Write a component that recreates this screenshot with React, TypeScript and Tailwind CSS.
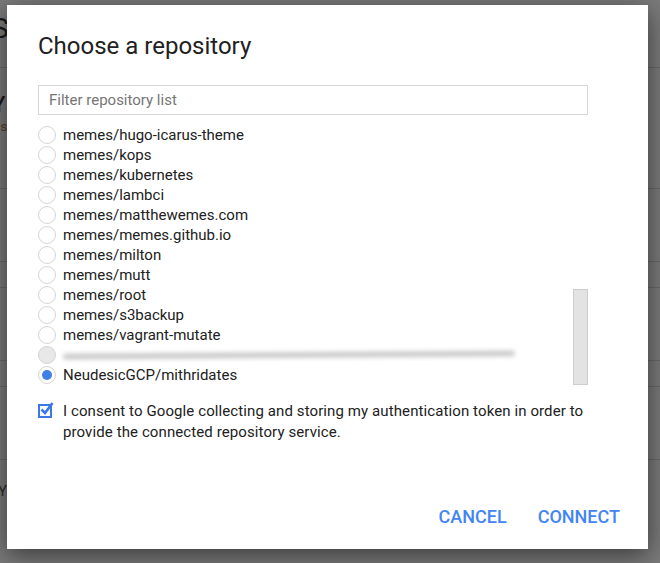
import React from "react";

const repos = [
  "memes/hugo-icarus-theme",
  "memes/kops",
  "memes/kubernetes",
  "memes/lambci",
  "memes/matthewemes.com",
  "memes/memes.github.io",
  "memes/milton",
  "memes/mutt",
  "memes/root",
  "memes/s3backup",
  "memes/vagrant-mutate",
];

function Radio({ checked = false, disabled = false }: { checked?: boolean; disabled?: boolean }) {
  return (
    <span
      className={`w-[18px] h-[18px] rounded-full border border-[#d4d4d4] flex items-center justify-center shrink-0 ${
        disabled ? "bg-[#e8e8e8]" : "bg-white"
      }`}
    >
      {checked && <span className="w-[10px] h-[10px] rounded-full bg-[#3f7fe8]" />}
    </span>
  );
}

export default function App() {
  return (
    <div
      className="relative w-[660px] h-[563px] overflow-hidden bg-[#7b7b7b]"
      style={{ fontFamily: "Roboto, 'Noto Sans', sans-serif" }}
    >
      {/* page behind the overlay */}
      <div className="-ml-[8px] text-[#1a1a1a]">
        <div className="h-[68px] border-b border-[#6a6a6a] pt-[12px] text-[28px] leading-[34px]">S</div>
        <div className="h-[121px] border-b border-[#6a6a6a] pt-[24px]">
          <div className="text-[22px] leading-[26px] font-medium">Y</div>
          <div className="text-[13px] leading-[18px] text-[#5a3a1a]">Us</div>
          <div className="text-[13px] leading-[18px] text-[#4a4a4a]">f</div>
        </div>
        <div className="h-[73px] border-b border-[#6a6a6a]" />
        <div className="h-[26px] border-b border-[#6a6a6a]" />
        <div className="h-[73px] border-b border-[#6a6a6a]" />
        <div className="h-[26px] border-b border-[#6a6a6a]" />
        <div className="h-[73px] border-b border-[#6a6a6a]" />
        <div className="pt-[20px] text-[15px] text-[#2a2a2a] pl-[6px]">Yo</div>
      </div>

      {/* dialog */}
      <div className="absolute left-[7px] top-[5px] w-[641px] h-[544px] bg-white shadow-[0_6px_24px_rgba(0,0,0,0.55)] flex flex-col px-[31px]">
        <h1 className="mt-[25px] text-[24px] leading-[32px] text-[#212121]">Choose a repository</h1>

        <div className="mt-[23px] mr-[29px] h-[30px] border border-[#d6d6d6] flex items-center px-[10px] text-[15px] text-[#757575]">
          Filter repository list
        </div>

        <div className="mt-[10px] mr-[29px] h-[260px] flex">
          <div className="flex-1 flex flex-col">
            {repos.map((r) => (
              <div key={r} className="h-[20px] flex items-center gap-[7px]">
                <Radio />
                <span className="text-[15px] text-[#212121] leading-[20px]">{r}</span>
              </div>
            ))}
            <div className="h-[20px] flex items-center gap-[7px]">
              <Radio disabled />
              <span className="w-[452px] h-[6px] rounded-full bg-[#cccccc] blur-[2px] -rotate-[0.4deg]" />
            </div>
            <div className="h-[20px] flex items-center gap-[7px]">
              <Radio checked />
              <span className="text-[15px] text-[#212121] leading-[20px]">NeudesicGCP/mithridates</span>
            </div>
          </div>
          <div className="w-[15px] flex flex-col justify-end">
            <div className="h-[96px] bg-[#e3e3e3] border border-[#cdcdcd]" />
          </div>
        </div>

        <div className="mt-[16px] flex gap-[11px] pr-[20px]">
          <span className="relative mt-[3px] w-[14px] h-[14px] border-2 border-[#3b78e7] shrink-0">
            <svg className="absolute -top-[5px] -left-[1px]" width="16" height="16" viewBox="0 0 16 16">
              <path d="M2.5 8.5 L6 12 L13.5 2" fill="none" stroke="#3b78e7" strokeWidth="2.6" />
            </svg>
          </span>
          <p className="text-[15px] leading-[21px] tracking-[0.1px] text-[#212121]">
            I consent to Google collecting and storing my authentication token in order to provide the connected repository service.
          </p>
        </div>

        <div className="mt-auto mb-[19px] flex justify-end gap-[31px]">
          <button className="text-[18px] font-medium text-[#4285f4]">CANCEL</button>
          <button className="text-[18px] font-medium text-[#4285f4] -mr-[3px]">CONNECT</button>
        </div>
      </div>
    </div>
  );
}
